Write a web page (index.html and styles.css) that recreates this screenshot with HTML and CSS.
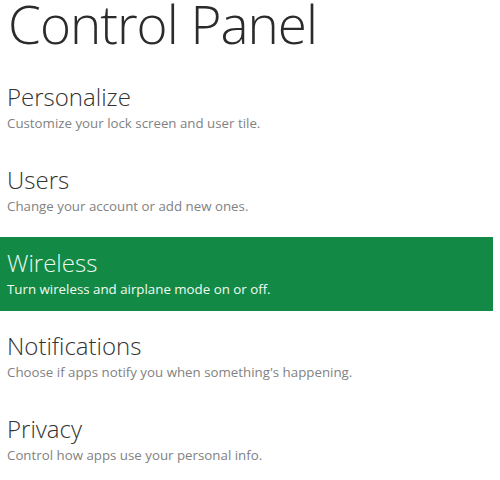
FILE: index.html
```html
<!DOCTYPE html>
<html>
<head>
<meta charset="utf-8">
<link rel="stylesheet" href="styles.css">
</head>
<body>
<div class="page">
  <h1 class="title">Control Panel</h1>
  <ul class="list">
    <li class="item">
      <div class="item-title">Personalize</div>
      <div class="item-desc">Customize your lock screen and user tile.</div>
    </li>
    <li class="item">
      <div class="item-title">Users</div>
      <div class="item-desc">Change your account or add new ones.</div>
    </li>
    <li class="item selected">
      <div class="item-title">Wireless</div>
      <div class="item-desc">Turn wireless and airplane mode on or off.</div>
    </li>
    <li class="item">
      <div class="item-title">Notifications</div>
      <div class="item-desc">Choose if apps notify you when something's happening.</div>
    </li>
    <li class="item">
      <div class="item-title">Privacy</div>
      <div class="item-desc">Control how apps use your personal info.</div>
    </li>
  </ul>
</div>
</body>
</html>
```

FILE: styles.css
```css
html, body {
  margin: 0;
  padding: 0;
  background: #ffffff;
}
body {
  font-family: "Open Sans", "Segoe UI", "Noto Sans", sans-serif;
  font-weight: 300;
  width: 500px;
  height: 480px;
  overflow: hidden;
}
.page {
  display: flex;
  flex-direction: column;
}
.title {
  margin: 0;
  height: 71px;
  padding-left: 8px;
  font-size: 53px;
  font-weight: 300;
  line-height: 48px;
  color: #2b2b2b;
  letter-spacing: -1px;
}
.list {
  list-style: none;
  margin: 0;
  padding: 0;
  display: flex;
  flex-direction: column;
  gap: 9px;
}
.item {
  box-sizing: border-box;
  width: 493px;
  height: 74px;
  padding: 12px 0 0 7px;
}
.item-title {
  font-size: 24px;
  line-height: 28px;
  color: #333333;
}
.item-desc {
  margin-top: 2px;
  font-size: 13.3px;
  line-height: 20px;
  color: #828282;
  font-weight: 400;
}
.selected {
  background: #128a45;
}
.selected .item-title {
  color: #eaf7ee;
}
.selected .item-desc {
  color: #f2faf4;
}
```
